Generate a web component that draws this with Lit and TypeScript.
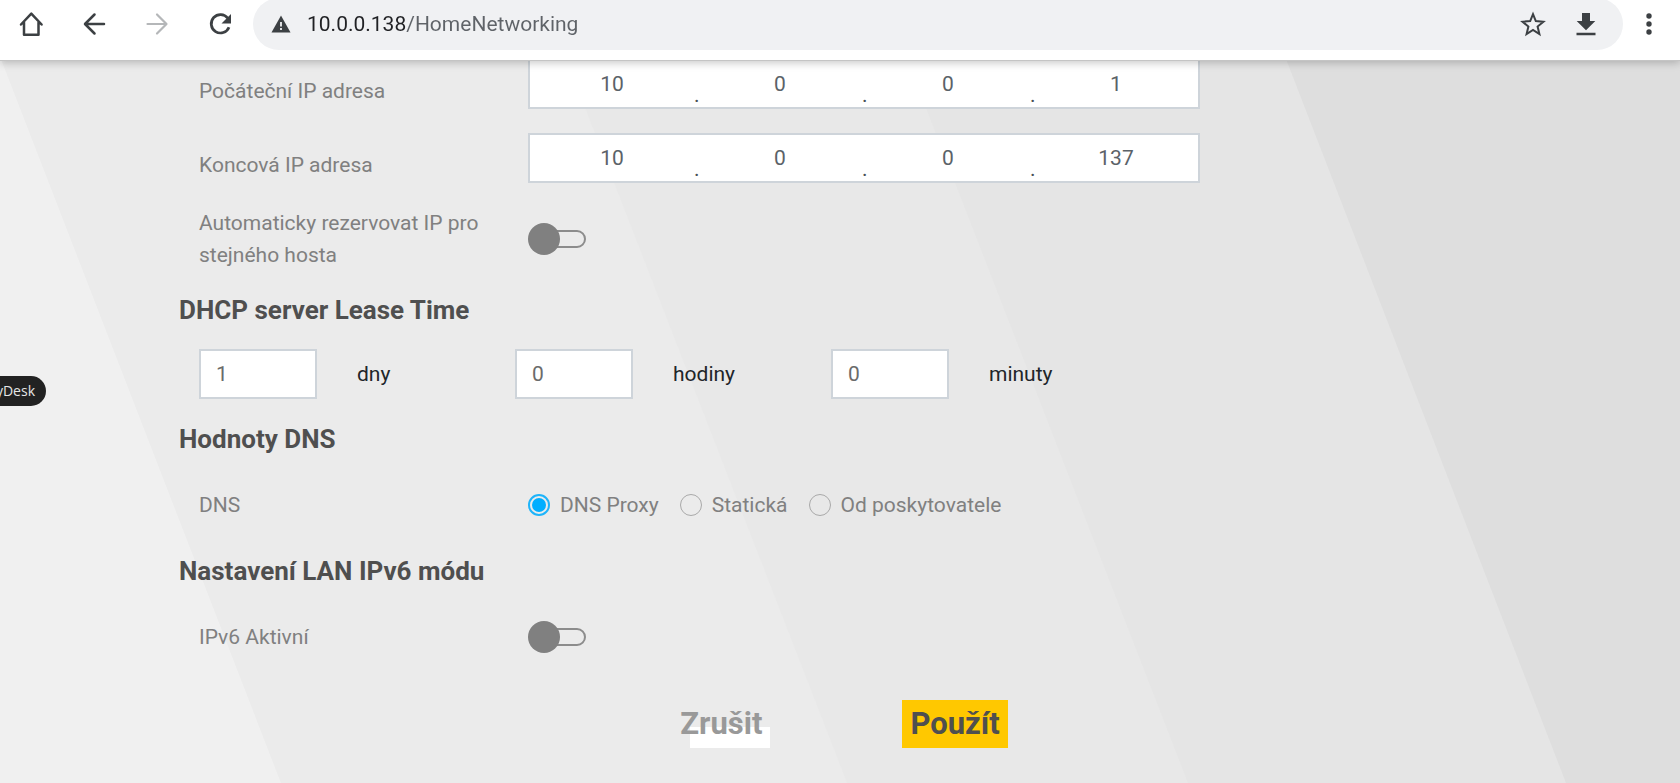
import { LitElement, html, css, svg } from "lit";
import { customElement, property } from "lit/decorators.js";

@customElement("browser-bar")
class BrowserBar extends LitElement {
  static styles = css`
    :host {
      display: block;
      position: relative;
      z-index: 2;
      background: #fff;
      border-bottom: 1px solid #c4c4c4;
      box-shadow: 0 2px 8px rgba(0, 0, 0, 0.22);
      font-family: Roboto, "Liberation Sans", sans-serif;
    }
    .bar {
      display: flex;
      align-items: center;
      height: 48px;
      padding: 0 17px 12px 17px;
    }
    .nav {
      display: flex;
      gap: 35px;
      margin-right: 19px;
    }
    .icon {
      display: grid;
      place-items: center;
      width: 28px;
      height: 28px;
      padding: 0;
      border: 0;
      background: none;
      color: #3c4043;
    }
    .icon:disabled {
      color: #b5b7b9;
    }
    .omnibox {
      display: flex;
      align-items: center;
      flex: 1;
      height: 52px;
      padding: 0 23px 0 18px;
      border-radius: 26px;
      background: #f0f1f3;
    }
    .omnibox svg {
      flex: none;
    }
    .url {
      flex: 1;
      min-width: 0;
      height: 32px;
      margin: 0 16px;
      padding: 0;
      border: 0;
      outline: 0;
      font: 21px/32px Roboto, "Liberation Sans", sans-serif;
      color: transparent;
      background: linear-gradient(90deg, #202124 98px, #5f6368 98px);
      -webkit-background-clip: text;
      background-clip: text;
    }
    .tools {
      display: flex;
      gap: 25px;
    }
    .menu {
      margin: 0 0 0 12px;
    }
  `;

  render() {
    return html`
      <header class="bar">
        <nav class="nav">
          <button class="icon" aria-label="Home">
            <svg width="28" height="28" viewBox="0 0 28 28" fill="none" stroke="currentColor" stroke-width="2.5" stroke-linejoin="round" stroke-linecap="round">
              <path d="M4 14.5 14.3 3.6 24.6 14.5M7 12.5V24.8H21.5V12.5" />
            </svg>
          </button>
          <button class="icon" aria-label="Back">
            <svg width="28" height="28" viewBox="0 0 28 28" fill="none" stroke="currentColor" stroke-width="2.5" stroke-linecap="round" stroke-linejoin="round">
              <path d="M24 14H5.5M14.5 4.5 5 14 14.5 23.5" />
            </svg>
          </button>
          <button class="icon" aria-label="Forward" disabled>
            <svg width="28" height="28" viewBox="0 0 28 28" fill="none" stroke="currentColor" stroke-width="2.2" stroke-linecap="round" stroke-linejoin="round">
              <path d="M4.5 14H23M14 4.5 23.5 14 14 23.5" />
            </svg>
          </button>
          <button class="icon" aria-label="Reload">
            <svg width="28" height="28" viewBox="0 0 28 28">
              <path d="M21.8 8.2A9.2 9.2 0 1 0 23 17.2" fill="none" stroke="currentColor" stroke-width="2.7" />
              <path d="M25 4v9.5h-9.5z" fill="currentColor" />
            </svg>
          </button>
        </nav>
        <div class="omnibox">
          <svg width="20" height="18" viewBox="0 0 20 18">
            <path d="M10 .5 19.5 17.5H.5z" fill="#3c4043" />
            <path d="M9.1 7h1.8v4.5H9.1zM9.1 13h1.8v2H9.1z" fill="#f0f1f3" />
          </svg>
          <input class="url" aria-label="Address" value="10.0.0.138/HomeNetworking" />
          <div class="tools">
            <button class="icon" aria-label="Bookmark">
              <svg width="28" height="28" viewBox="0 0 28 28" fill="none" stroke="currentColor" stroke-width="2">
                <path d="M14 4.2 16.8 11.1 24.4 11.7 18.6 16.6 20.4 24 14 20 7.6 24 9.4 16.6 3.6 11.7 11.2 11.1z" />
              </svg>
            </button>
            <button class="icon" aria-label="Downloads">
              <svg width="28" height="28" viewBox="0 0 28 28" fill="currentColor">
                <path d="M10 3h8v8h5.3L14 20.2 4.7 11H10zM4.5 22.700h19v2.6h-19z" />
              </svg>
            </button>
          </div>
        </div>
        <button class="icon menu" aria-label="Menu">
          <svg width="28" height="28" viewBox="0 0 28 28" fill="currentColor">
            <circle cx="14" cy="6" r="2.7" />
            <circle cx="14" cy="14" r="2.7" />
            <circle cx="14" cy="22" r="2.7" />
          </svg>
        </button>
      </header>
    `;
  }
}

@customElement("ip-field")
class IpField extends LitElement {
  @property() label = "";
  @property({ type: Array }) octets: number[] = [];

  static styles = css`
    :host {
      display: block;
    }
    .box {
      display: flex;
      box-sizing: border-box;
      height: 50px;
      border: 2px solid #ced4da;
      background: #fff;
      color: #495057;
    }
    .octet {
      flex: 1;
      min-width: 0;
      padding: 0;
      border: 0;
      outline: 0;
      background: none;
      text-align: center;
      font: inherit;
      color: #5b6268;
    }
    .dot {
      width: 4px;
      align-self: flex-end;
      line-height: 24px;
    }
  `;

  render() {
    return html`
      <div class="box" role="group" aria-label=${this.label}>
        ${this.octets.map(
          (n, i) => html`${i ? html`<span class="dot">.</span>` : ""}<input
              class="octet"
              inputmode="numeric"
              aria-label="${this.label} ${i + 1}"
              .value=${String(n)}
            />`
        )}
      </div>
    `;
  }
}

@customElement("app-root")
class AppRoot extends LitElement {
  static styles = css`
    :host {
      display: flex;
      flex-direction: column;
      min-height: 100vh;
      overflow: hidden;
      font: 21px/32px Roboto, "Liberation Sans", sans-serif;
      color: #808080;
    }
    .page {
      display: grid;
      grid-template-columns: minmax(0, 1fr);
      flex: 1;
      margin-top: -2px;
      background: #dedede;
    }
    .bands,
    .form {
      grid-area: 1 / 1;
    }
    .bands {
      width: 100%;
      height: 100%;
      min-height: 0;
      contain: size;
    }
    .form {
      z-index: 1;
      display: flex;
      flex-direction: column;
      gap: 24px;
    }
    .fields {
      display: flex;
      flex-direction: column;
      gap: 24px;
      box-sizing: border-box;
      width: 100%;
      max-width: 1200px;
      padding-left: 179px;
    }
    .row {
      display: grid;
      grid-template-columns: 309px minmax(0, 1fr);
      column-gap: 20px;
      padding-left: 20px;
    }
    .caption {
      padding-top: 16px;
      height: 34px;
    }
    .line {
      align-items: center;
      min-height: 54px;
    }
    .heading {
      margin: 0;
      font-size: 26px;
      line-height: 30px;
      font-weight: 700;
      color: #4f4f4f;
    }
    .lease {
      display: grid;
      grid-template-columns: repeat(3, 316px);
      padding: 0 0 1px 20px;
    }
    .unit {
      display: flex;
      align-items: center;
      gap: 40px;
      color: #212529;
    }
    .number {
      box-sizing: border-box;
      width: 118px;
      height: 50px;
      padding: 0 15px;
      border: 2px solid #ced4da;
      border-radius: 0;
      outline: 0;
      background: #fff;
      font: inherit;
      color: #6b6b6b;
    }
    .toggle {
      appearance: none;
      display: grid;
      align-items: center;
      width: 58px;
      height: 32px;
      margin: 0;
    }
    .toggle::before,
    .toggle::after {
      content: "";
      grid-area: 1 / 1;
      box-sizing: border-box;
    }
    .toggle::before {
      justify-self: end;
      width: 48px;
      height: 18px;
      border: 2px solid #8c8c8c;
      border-radius: 9px;
    }
    .toggle::after {
      width: 32px;
      height: 32px;
      border-radius: 50%;
      background: #808080;
    }
    .toggle:checked::after {
      justify-self: end;
    }
    .radios {
      display: flex;
      gap: 21px;
    }
    .choice {
      display: flex;
      align-items: center;
      gap: 10px;
    }
    .radio {
      appearance: none;
      display: grid;
      place-items: center;
      box-sizing: border-box;
      width: 22px;
      height: 22px;
      margin: 0;
      border: 1px solid #a9a9a9;
      border-radius: 50%;
    }
    .radio:checked {
      border: 2px solid #1eb4fa;
    }
    .radio:checked::before {
      content: "";
      width: 14px;
      height: 14px;
      border-radius: 50%;
      background: #00aeff;
    }
    .actions {
      display: flex;
      justify-content: center;
      gap: 132px;
      padding: 12px 0 32px;
    }
    .button {
      height: 48px;
      padding: 0 8px;
      border: 0;
      font: 700 31px/48px Roboto, "Liberation Sans", sans-serif;
    }
    .cancel {
      color: #999;
      background: linear-gradient(#fff, #fff) right bottom / 80px 21px no-repeat;
    }
    .apply {
      color: #4f4f4f;
      background: #ffc800;
    }
    .anydesk {
      position: absolute;
      top: 376px;
      left: 0;
      z-index: 3;
      box-sizing: border-box;
      width: 46px;
      height: 30px;
      padding-right: 11px;
      display: flex;
      justify-content: flex-end;
      overflow: hidden;
      border-radius: 0 15px 15px 0;
      background: #222;
      color: #e6e6e6;
      font: 14px/30px "Open Sans", "Noto Sans", sans-serif;
    }
  `;

  private bands() {
    return svg`
      <polygon points="0,0 1286,0 1566,723 0,723" fill="#e5e5e5" />
      <polygon points="0,0 907,0 1188,723 0,723" fill="#e8e8e8" />
      <polygon points="0,0 566,0 847,723 0,723" fill="#ebebeb" />
      <polygon points="0,0 1,0 281,723 0,723" fill="#f0f0f0" />
    `;
  }

  private lease(value: number, unit: string) {
    return html`
      <label class="unit"><input class="number" .value=${String(value)} />${unit}</label>
    `;
  }

  private choice(text: string, checked = false) {
    return html`
      <label class="choice"><input class="radio" type="radio" name="dns" .checked=${checked} />${text}</label>
    `;
  }

  render() {
    return html`
      <browser-bar></browser-bar>
      <main class="page">
        <svg class="bands" viewBox="0 0 1680 723" preserveAspectRatio="none" aria-hidden="true">${this.bands()}</svg>
        <form class="form" @submit=${(e: Event) => e.preventDefault()}>
          <div class="fields">
            <div class="row">
              <span class="caption">Počáteční IP adresa</span>
              <ip-field label="Počáteční IP adresa" .octets=${[10, 0, 0, 1]}></ip-field>
            </div>
            <div class="row">
              <span class="caption">Koncová IP adresa</span>
              <ip-field label="Koncová IP adresa" .octets=${[10, 0, 0, 137]}></ip-field>
            </div>
            <div class="row line">
              <label for="reserve">Automaticky rezervovat IP pro stejného hosta</label>
              <input id="reserve" class="toggle" type="checkbox" />
            </div>
            <h2 class="heading">DHCP server Lease Time</h2>
            <div class="lease">
              ${this.lease(1, "dny")} ${this.lease(0, "hodiny")} ${this.lease(0, "minuty")}
            </div>
            <h2 class="heading">Hodnoty DNS</h2>
            <div class="row line">
              <span id="dns">DNS</span>
              <div class="radios" role="radiogroup" aria-labelledby="dns">
                ${this.choice("DNS Proxy", true)} ${this.choice("Statická")} ${this.choice("Od poskytovatele")}
              </div>
            </div>
            <h2 class="heading">Nastavení LAN IPv6 módu</h2>
            <div class="row line">
              <label for="ipv6">IPv6 Aktivní</label>
              <input id="ipv6" class="toggle" type="checkbox" />
            </div>
          </div>
          <div class="actions">
            <button class="button cancel" type="button">Zrušit</button>
            <button class="button apply" type="submit">Použít</button>
          </div>
        </form>
      </main>
      <div class="anydesk">yDesk</div>
    `;
  }
}
